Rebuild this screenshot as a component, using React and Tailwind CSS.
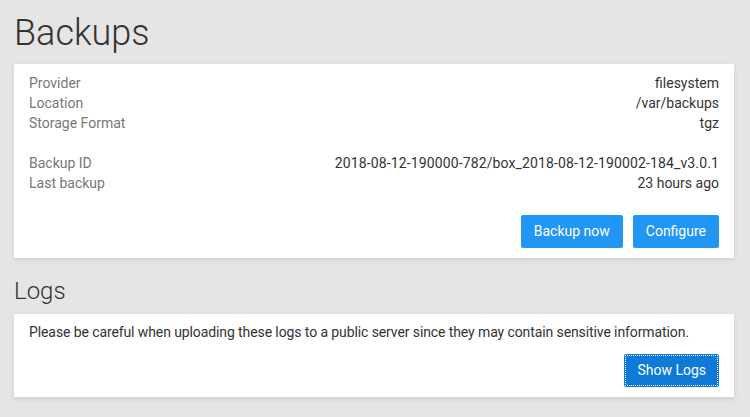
export default function App() {
  const rows = [
    ['Provider', 'filesystem'],
    ['Location', '/var/backups'],
    ['Storage Format', 'tgz'],
  ]

  return (
    <div
      className="min-h-screen bg-[#e5e5e5] pl-[14px] pr-[16px] pt-[12px] pb-4 text-[14px] text-[#333]"
      style={{ fontFamily: 'Roboto, "Liberation Sans", sans-serif' }}
    >
      <h1 className="text-[36px] font-light leading-[42px] text-[#333]">Backups</h1>
      <div className="mt-[10px] bg-white px-[15px] pt-[9px] pb-[10px] shadow-[0_2px_5px_rgba(0,0,0,0.1)]">
        {rows.map(([k, v]) => (
          <div key={k} className="flex justify-between leading-[20px]">
            <span className="text-[#777]">{k}</span>
            <span>{v}</span>
          </div>
        ))}
        <div className="h-[20px]" />
        <div className="flex justify-between leading-[20px]">
          <span className="text-[#777]">Backup ID</span>
          <span className="tracking-[0.13px]">2018-08-12-190000-782/box_2018-08-12-190002-184_v3.0.1</span>
        </div>
        <div className="flex justify-between leading-[20px]">
          <span className="text-[#777]">Last backup</span>
          <span>23 hours ago</span>
        </div>
        <div className="mt-[22px] flex justify-end gap-[10px]">
          <button className="h-[33px] rounded-[2px] bg-[#2196f3] px-[13px] text-white">Backup now</button>
          <button className="h-[33px] rounded-[2px] bg-[#2196f3] px-[13px] text-white">Configure</button>
        </div>
      </div>
      <h2 className="mt-[18px] text-[24px] font-light leading-[30px] text-[#333]">Logs</h2>
      <div className="mt-[8px] bg-white px-[15px] pt-[8px] pb-[10px] shadow-[0_2px_5px_rgba(0,0,0,0.1)]">
        <p className="leading-[20px] tracking-[-0.1px]">
          Please be careful when uploading these logs to a public server since they may contain sensitive information.
        </p>
        <div className="mt-[12px] flex justify-end">
          <button className="h-[33px] rounded-[2px] bg-[#0e7ad6] px-[13px] text-white outline-1 outline-dotted outline-offset-[-2px] outline-white">
            Show Logs
          </button>
        </div>
      </div>
    </div>
  )
}
